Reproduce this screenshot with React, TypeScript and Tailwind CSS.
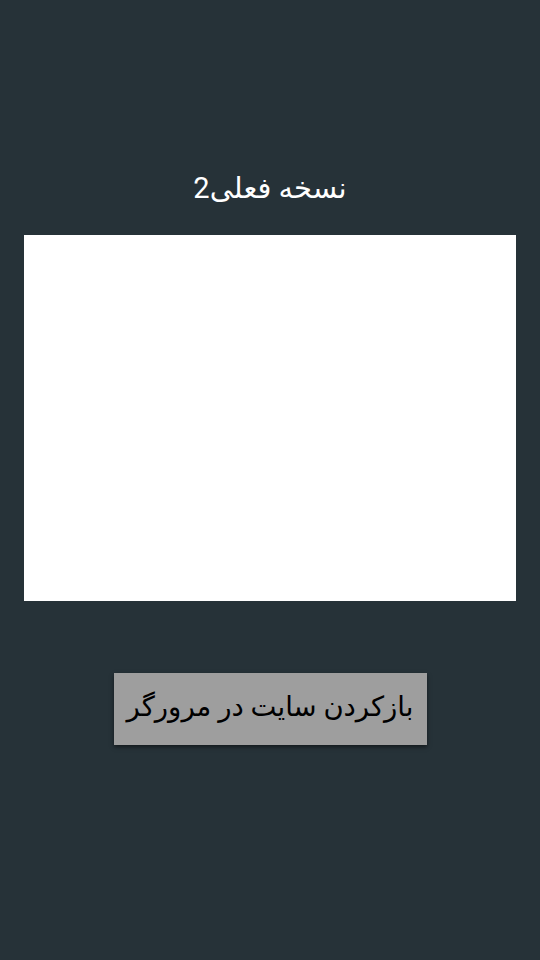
export default function App() {
  return (
    <div className="w-[540px] h-[960px] bg-[#263238] flex flex-col items-center" style={{ fontFamily: 'Roboto, "DejaVu Sans", sans-serif' }}>
      <div dir="rtl" className="mt-[168px] h-[40px] text-white text-[29px] leading-[40px]">نسخه فعلی2</div>
      <div className="mt-[27px] w-[492px] h-[366px] bg-white" />
      <button dir="rtl" className="mt-[72px] w-[313px] h-[72px] pb-[5px] bg-[#9e9e9e] text-black text-[27.5px] leading-[40px] shadow-[0_2px_4px_rgba(0,0,0,0.5)]">بازکردن سایت در مرورگر</button>
    </div>
  );
}
